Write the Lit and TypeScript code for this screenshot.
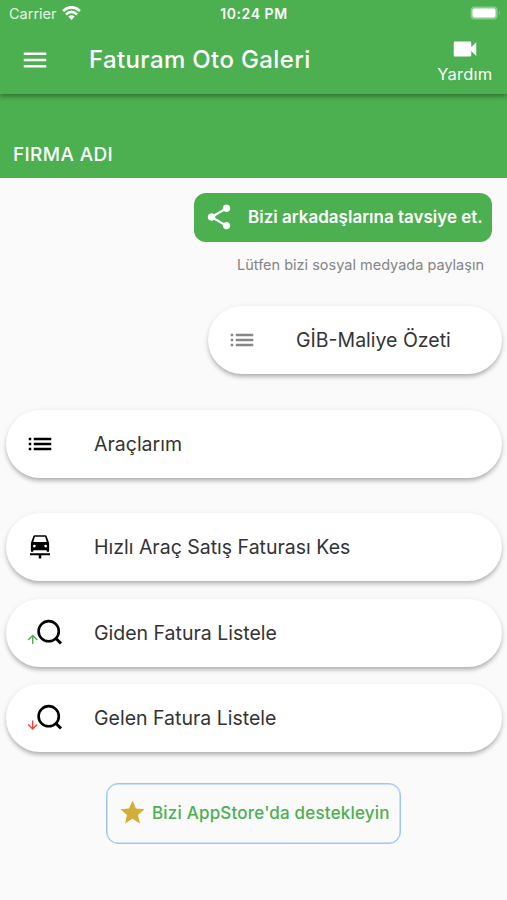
import { LitElement, html, css, svg } from "lit";
import { customElement, property } from "lit/decorators.js";

const listIcon = svg`<path d="M3 13h2v-2H3v2zm0 4h2v-2H3v2zm0-8h2V7H3v2zm4 4h14v-2H7v2zm0 4h14v-2H7v2zM7 7v2h14V7H7z"/>`;
const menuIcon = svg`<path d="M3 18h18v-2H3v2zm0-5h18v-2H3v2zm0-7v2h18V6H3z"/>`;
const videoIcon = svg`<path d="M17 10.5V7c0-.55-.45-1-1-1H4c-.55 0-1 .45-1 1v10c0 .55.45 1 1 1h12c.55 0 1-.45 1-1v-3.5l4 4v-11l-4 4z"/>`;
const shareIcon = svg`<path d="M18 16.08c-.76 0-1.44.3-1.96.77L8.91 12.7c.05-.23.09-.46.09-.7s-.04-.47-.09-.7l7.05-4.11c.54.5 1.25.81 2.04.81 1.66 0 3-1.34 3-3s-1.34-3-3-3-3 1.34-3 3c0 .24.04.47.09.7L8.04 9.81C7.5 9.31 6.79 9 6 9c-1.66 0-3 1.34-3 3s1.34 3 3 3c.79 0 1.5-.31 2.04-.81l7.12 4.16c-.05.21-.08.43-.08.65 0 1.61 1.31 2.92 2.92 2.92 1.61 0 2.92-1.31 2.92-2.92s-1.31-2.92-2.92-2.92z"/>`;
const starIcon = svg`<path d="M12 17.27L18.18 21l-1.64-7.03L22 9.24l-7.19-.61L12 2 9.19 8.63 2 9.24l5.46 4.73L5.82 21z"/>`;
const carIcon = svg`<path d="M17.4 3.600c-.2-.6-.7-1-1.35-1h-8.1c-.65 0-1.15.4-1.35 1L4.700 8.800v6.300c0 .4.3.7.7.7h.6c.4 0 .7-.3.7-.7V14.500h10.600v.6c0 .4.3.7.7.7h.6c.4 0 .7-.3.7-.7V8.800zM7.900 3.700h8.200l1.300 4.300H6.600zM7.500 12.300a1.100 1.100 0 1 1 0-2.200 1.100 1.100 0 0 1 0 2.200zm9 0a1.100 1.100 0 1 1 0-2.200 1.100 1.100 0 0 1 0 2.200zM4 17h16v1.600h-7v2.600h-2v-2.600H4z" fill-rule="evenodd"/>`;

@customElement("menu-card")
export class MenuCard extends LitElement {
  @property() label = "";
  @property() icon: "list" | "car" | "up" | "down" = "list";

  static styles = css`
    :host { display: flex; align-items: center; box-sizing: border-box; height: 68px; border-radius: 34px;
      background: #fff; padding-left: 22px; color: #333;
      box-shadow: 0 3.5px 4px -1px rgba(0,0,0,.24), 0 2px 6px rgba(0,0,0,.11); }
    .lead { width: 66px; height: 36px; display: flex; align-items: center; }
    .lead svg { display: block; overflow: visible; }
    .label { font: 400 19.5px/26px Inter, sans-serif; white-space: nowrap; }
    .list { fill: var(--icon, #000); margin-left: -3px; }
    .car { fill: #000; margin-left: -3px; }
    .search { fill: none; stroke: #000; stroke-width: 2.6; }
    .handle { stroke-width: 3; }
    .up { stroke: #4caf50; stroke-width: 1.4; }
    .down { stroke: #f44336; stroke-width: 1.4; }
  `;

  private lead() {
    if (this.icon === "list") return html`<svg class="list" width="30" height="30" viewBox="0 0 24 24">${listIcon}</svg>`;
    if (this.icon === "car") return html`<svg class="car" width="30" height="30" viewBox="0 0 24 24">${carIcon}</svg>`;
    return html`<svg class="search" width="36" height="36" viewBox="0 0 36 36">
      <circle cx="20.7" cy="16.2" r="10.1"/><path class="handle" d="M27.8 23.3l5.2 5.2"/>
      ${this.icon === "up"
        ? svg`<path class="up" d="M4.700 29v-8.500M.2 25l4.500-4.500L9.200 25"/>`
        : svg`<path class="down" d="M4.700 20.500V29M.2 24.500L4.700 29l4.500-4.500"/>`}
    </svg>`;
  }

  render() {
    return html`<div class="lead">${this.lead()}</div><span class="label">${this.label}</span>`;
  }
}

@customElement("app-root")
export class AppRoot extends LitElement {
  static styles = css`
    :host { display: flex; flex-direction: column; height: 900px; overflow: hidden; background: #fafafa;
      font-family: Inter, sans-serif; color: #fff; }
    svg { display: block; fill: currentColor; flex: none; }
    span { white-space: nowrap; }
    .top { background: #4caf50; height: 94px; position: relative; box-shadow: 0 2px 5px rgba(0,0,0,.4); }
    .status { height: 27px; display: grid; grid-template-columns: 1fr auto 1fr; align-items: center; padding: 0 6px 0 9px; }
    .carrier { display: flex; align-items: center; gap: 5px; font-size: 14.5px; line-height: 27px; color: #e6f5e7; }
    .carrier svg { margin-bottom: 1px; }
    .time { font-size: 14px; font-weight: 600; line-height: 27px; letter-spacing: .55px; margin-right: 2px; }
    .battery { justify-self: end; margin-bottom: 1px; }
    .bar { height: 66px; display: flex; align-items: center; padding: 0 14.5px 0 20px; }
    .title { font-size: 24px; font-weight: 500; line-height: 30px; margin-left: 39px; letter-spacing: .37px; flex: 1; }
    .help { display: flex; flex-direction: column; align-items: center; margin-bottom: 3px; font-size: 16.5px; line-height: 20px; letter-spacing: .25px; }
    .firm { background: #4caf50; height: 84px; display: flex; align-items: flex-end; box-sizing: border-box;
      padding: 0 13px 11px; font-size: 19px; font-weight: 500; line-height: 24px; letter-spacing: .35px; }
    .share { align-self: flex-end; display: flex; align-items: center; box-sizing: border-box; width: 298px; height: 49px;
      margin: 14.5px 15px 0 0; padding: 0 0 1px 10px; border-radius: 12px; background: #4caf50; }
    .share-text { margin-left: 14px; font-size: 17px; font-weight: 600; line-height: 20px; }
    .hint { align-self: flex-end; margin: 13px 23px 0 0; font-size: 14.5px; line-height: 20px; color: #858585; }
    .cards { display: flex; flex-direction: column; padding: 31.2px 5px 0 6px; }
    .summary { align-self: flex-end; width: 294px; --icon: #888; }
    .gap { margin-top: 35.9px; }
    .near { margin-top: 17.4px; }
    .support { align-self: center; display: flex; align-items: center; box-sizing: border-box; width: 295px; height: 61px;
      margin-top: 30.3px; padding: 0 0 1px 11px; border: 1px solid #a1c4f8; box-shadow: inset 0 0 0 .5px #a1c4f8;
      border-radius: 12px; color: #4caf50; }
    .star { color: #d4af37; }
    .support-text { margin-left: 5px; font-size: 17px; font-weight: 500; line-height: 20px; letter-spacing: .19px; }
  `;

  render() {
    return html`
      <header class="top">
        <div class="status">
          <div class="carrier"><span class="carrier-name">Carrier</span>
            <svg width="19" height="14" viewBox="0 0 19 14" fill="none" stroke="#fff" stroke-width="2.7">
              <path fill="none" d="M1 5.100Q9.500-2.600 18 5.100M4 8.400q5.500-4.900 11 0"/><path stroke="none" fill="#fff" d="M6.300 10.600q3.200-2.700 6.400 0L9.500 14z"/>
            </svg>
          </div>
          <span class="time">10:24 PM</span>
          <svg class="battery" width="31" height="14" viewBox="0 0 31 14">
            <rect x=".6" y=".6" width="27" height="12.800" rx="4" fill="#8bcd8e"/><rect x="2.500" y="2.500" width="23" height="9" rx="2.200" fill="#fff"/>
            <path d="M29 5q2 2 0 4z" fill="#8bcd8e"/>
          </svg>
        </div>
        <div class="bar">
          <svg width="30" height="30" viewBox="0 0 24 24">${menuIcon}</svg>
          <span class="title">Faturam Oto Galeri</span>
          <div class="help"><svg width="30" height="30" viewBox="0 0 24 24">${videoIcon}</svg><span class="help-text">Yardım</span></div>
        </div>
      </header>
      <div class="firm"><span class="firm-name">FIRMA ADI</span></div>
      <div class="share"><svg width="30" height="30" viewBox="0 0 24 24">${shareIcon}</svg><span class="share-text">Bizi arkadaşlarına tavsiye et.</span></div>
      <span class="hint">Lütfen bizi sosyal medyada paylaşın</span>
      <main class="cards">
        <menu-card class="summary" label="GİB-Maliye Özeti"></menu-card>
        <menu-card class="gap" label="Araçlarım"></menu-card>
        <menu-card class="gap" icon="car" label="Hızlı Araç Satış Faturası Kes"></menu-card>
        <menu-card class="near" icon="up" label="Giden Fatura Listele"></menu-card>
        <menu-card class="near" icon="down" label="Gelen Fatura Listele"></menu-card>
      </main>
      <div class="support"><svg class="star" width="29" height="29" viewBox="0 0 24 24">${starIcon}</svg><span class="support-text">Bizi AppStore'da destekleyin</span></div>
    `;
  }
}
